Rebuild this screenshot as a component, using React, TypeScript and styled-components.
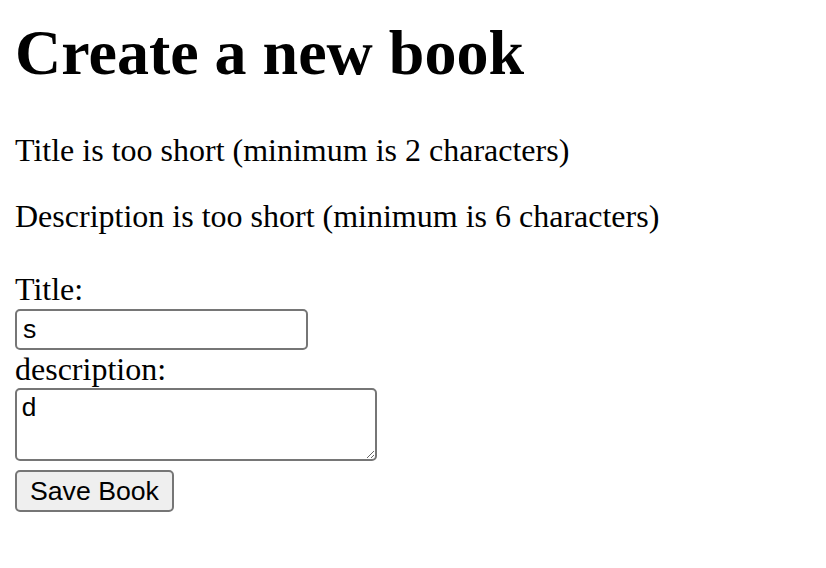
import React from "react"
import styled, { createGlobalStyle } from "styled-components"

const GlobalStyle = createGlobalStyle`
  html, body {
    margin: 0;
    background: #ffffff;
  }
  body {
    font-family: "Liberation Serif", "Times New Roman", serif;
    color: #000000;
  }
`

const errors = [
  "Title is too short (minimum is 2 characters)",
  "Description is too short (minimum is 6 characters)",
]

export default function App() {
  return (
    <>
      <GlobalStyle />
      <Page>
        <Heading>Create a new book</Heading>
        <ErrorList>
          {errors.map((message, idx) => (
            <ErrorMessage key={idx}>{message}</ErrorMessage>
          ))}
        </ErrorList>
        <Form onSubmit={e => e.preventDefault()}>
          <Label htmlFor="book_title">Title:</Label>
          <TextInput id="book_title" type="text" defaultValue="s" />
          <Label htmlFor="book_description">description:</Label>
          <TextArea id="book_description" defaultValue="d" />
          <SubmitButton type="submit">Save Book</SubmitButton>
        </Form>
      </Page>
    </>
  )
}

const Page = styled.div`
  display: flex;
  flex-direction: column;
  align-items: flex-start;
  padding: 15px;
`

const Heading = styled.h1`
  margin: 1px 0 41px;
  font-size: 64px;
  line-height: 74px;
  font-weight: 700;
`

const ErrorList = styled.div`
  display: flex;
  flex-direction: column;
  gap: 28px;
`

const ErrorMessage = styled.p`
  margin: 0;
  font-size: 32px;
  line-height: 38px;
`

const Form = styled.form`
  display: flex;
  flex-direction: column;
  align-items: flex-start;
  margin-top: 35px;
`

const Label = styled.label`
  font-size: 32px;
  line-height: 38px;
`

const TextInput = styled.input`
  box-sizing: border-box;
  width: 293px;
  height: 41px;
  margin: 1px 0 0;
  padding: 0 6px;
  border: 2px solid #767676;
  border-radius: 5px;
  background: #ffffff;
  font-family: "Liberation Sans", Arial, sans-serif;
  font-size: 26.67px;
  color: #000000;
`

const TextArea = styled.textarea`
  box-sizing: border-box;
  width: 362px;
  height: 73px;
  margin: 0;
  padding: 4px;
  border: 2px solid #767676;
  border-radius: 5px;
  background: #ffffff;
  font-family: "Liberation Mono", "Courier New", monospace;
  font-size: 26.67px;
  line-height: 30px;
  color: #000000;
`

const SubmitButton = styled.button`
  box-sizing: border-box;
  height: 42px;
  margin-top: 9px;
  padding: 0 13px;
  border: 2px solid #767676;
  border-radius: 5px;
  background: #efefef;
  font-family: "Liberation Sans", Arial, sans-serif;
  font-size: 26.67px;
  color: #000000;
`
